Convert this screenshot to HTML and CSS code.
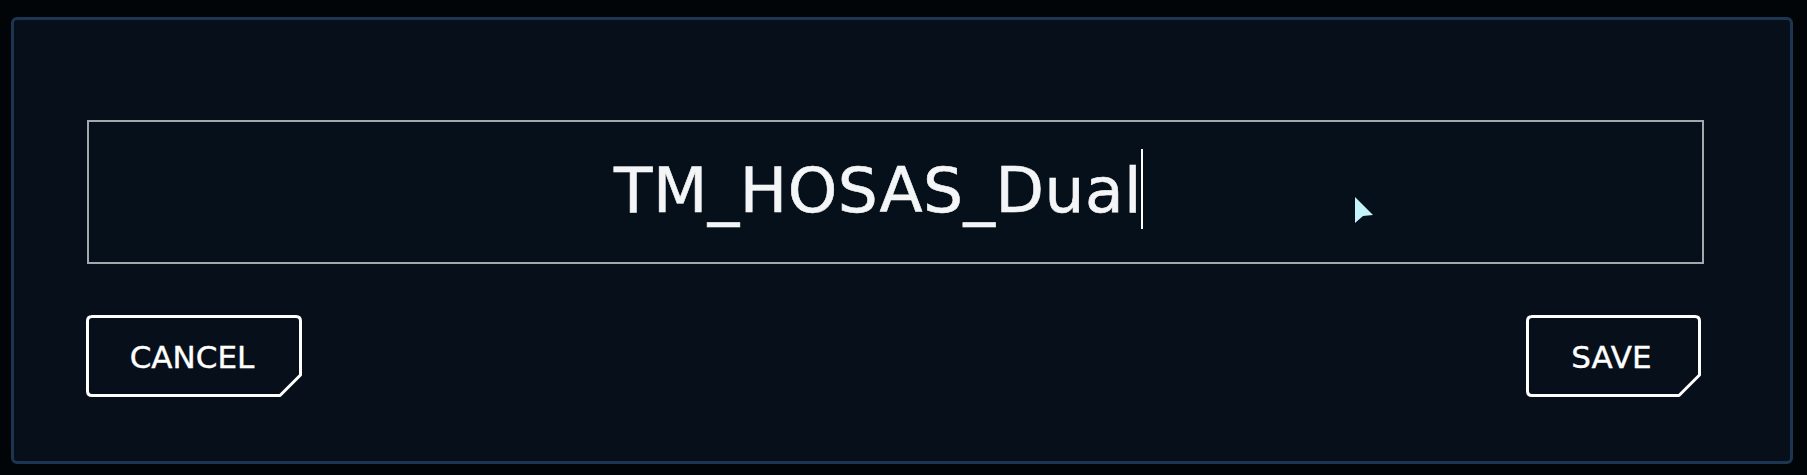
FILE: index.html
```html
<!DOCTYPE html>
<html>
<head>
<meta charset="utf-8">
<link rel="stylesheet" href="styles.css">
</head>
<body>
<div class="panel">
  <div class="field">
    <span class="value">TM_HOSAS_Dual</span><span class="caret"></span>
    <svg class="pointer" width="19" height="27" viewBox="0 0 19 27"><polygon points="0,0 18,18 8,19 0,26" fill="#c2f4fa"/></svg>
  </div>
  <div class="actions">
    <button class="btn btn-cancel">
      <svg class="frame" width="216" height="82" viewBox="0 0 216 82"><path d="M5.5 1.5 H210 Q214.5 1.5 214.5 6 V60 L194 80.5 H6 Q1.5 80.5 1.5 76 V6 Q1.5 1.5 6 1.5 Z" fill="none" stroke="#ffffff" stroke-width="3" stroke-linejoin="round"/></svg>
      <span class="label">CANCEL</span>
    </button>
    <button class="btn btn-save">
      <svg class="frame" width="175" height="82" viewBox="0 0 175 82"><path d="M5.5 1.5 H169 Q173.5 1.5 173.5 6 V60 L153 80.5 H6 Q1.5 80.5 1.5 76 V6 Q1.5 1.5 6 1.5 Z" fill="none" stroke="#ffffff" stroke-width="3" stroke-linejoin="round"/></svg>
      <span class="label">SAVE</span>
    </button>
  </div>
</div>
</body>
</html>
```
FILE: styles.css
```css
html, body {
  margin: 0;
  padding: 0;
  background: #020508;
  width: 1807px;
  height: 475px;
  overflow: hidden;
  font-family: "DejaVu Sans", "Liberation Sans", sans-serif;
}

.panel {
  box-sizing: border-box;
  margin: 17px 14px 0 11px;
  width: 1782px;
  height: 447px;
  border: 3px solid #1c3651;
  border-radius: 6px;
  background: #07101a;
  padding: 100px 86px 64px 73px;
  display: flex;
  flex-direction: column;
  gap: 51px;
}

.field {
  position: relative;
  box-sizing: border-box;
  height: 144px;
  border: 2px solid #a3a8ad;
  background: #06101a;
  display: flex;
  align-items: center;
  justify-content: center;
  padding-right: 34px;
}

.value {
  color: #f3f5f7;
  font-size: 63px;
  line-height: 1;
  letter-spacing: 0.5px;
  margin-top: -4px;
  -webkit-text-stroke: 0.6px #f3f5f7;
}

.caret {
  display: inline-block;
  width: 2px;
  height: 80px;
  background: #ffffff;
  margin-left: -1px;
  margin-top: -6px;
}

.pointer {
  position: absolute;
  left: 1266px;
  top: 75px;
}

.actions {
  display: flex;
  justify-content: space-between;
  align-items: flex-start;
}

.btn {
  position: relative;
  height: 82px;
  padding: 0;
  margin: 0;
  border: none;
  background: transparent;
  color: #ffffff;
  font-family: "DejaVu Sans", "Liberation Sans", sans-serif;
  font-size: 31px;
  display: flex;
  align-items: center;
  justify-content: center;
  cursor: pointer;
}

.btn-cancel {
  width: 216px;
  margin-left: -1px;
}

.btn-save {
  width: 175px;
  margin-right: 3px;
}

.frame {
  position: absolute;
  left: 0;
  top: 0;
}

.label {
  position: relative;
  margin-top: 2px;
  margin-right: 4px;
  -webkit-text-stroke: 0.4px #ffffff;
}
```
